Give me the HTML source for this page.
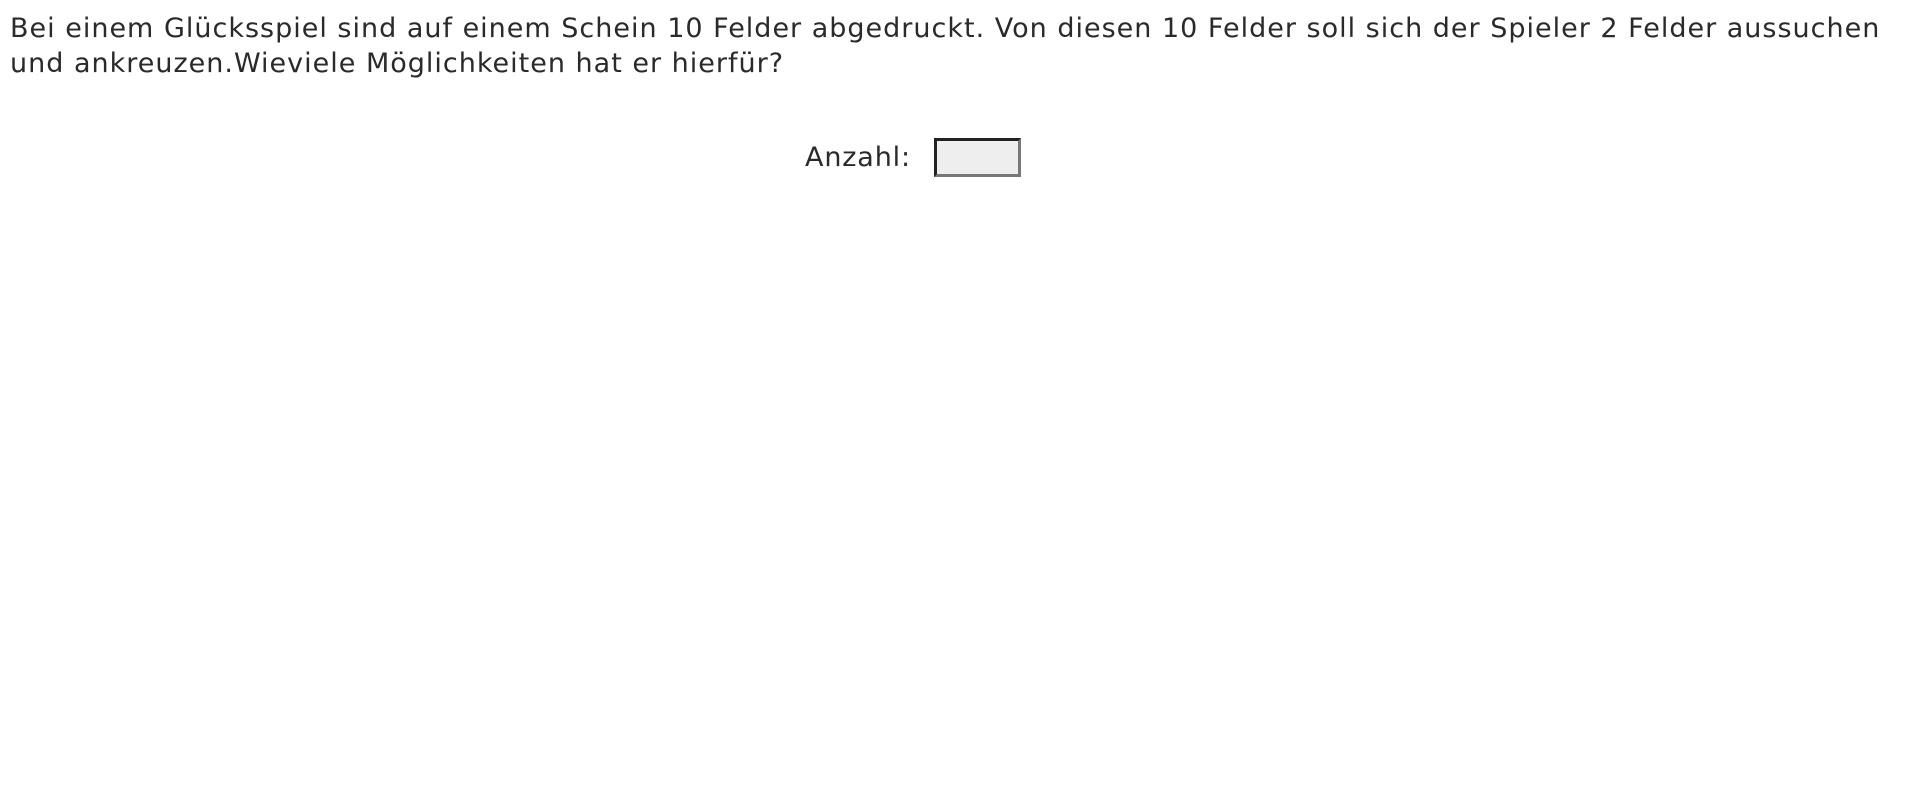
<!DOCTYPE html>
<html><head><meta charset="utf-8"><style>
html,body{margin:0;padding:0;background:#fff;width:1920px;height:810px;overflow:hidden}
body{font-family:"DejaVu Sans","Liberation Sans",sans-serif;color:#2a2a2a;font-size:27px;letter-spacing:0.85px}
.q{position:absolute;left:10px;top:11px;width:1950px;line-height:35px;white-space:nowrap;letter-spacing:1px}
.lab{position:absolute;left:805px;top:143px;line-height:30px}
.box{position:absolute;left:934px;top:138px;width:81px;height:33px;background:#eee;border:3px solid;border-color:#222 #777 #777 #222}
</style></head><body>
<div class="q">Bei einem Glücksspiel sind auf einem Schein 10 Felder abgedruckt. Von diesen 10 Felder soll sich der Spieler 2 Felder aussuchen<br>und ankreuzen.Wieviele Möglichkeiten hat er hierfür?</div>
<div class="lab">Anzahl:</div>
<div class="box"></div>
</body></html>
